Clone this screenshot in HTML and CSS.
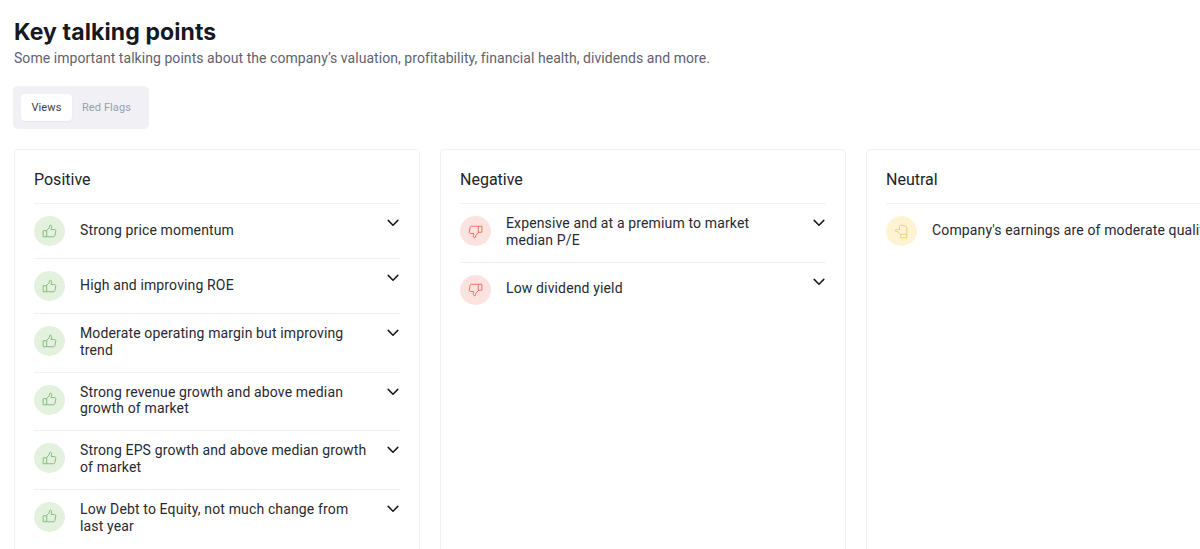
FILE: index.html
```html
<!DOCTYPE html>
<html lang="en">
<head>
<meta charset="utf-8">
<title>Key talking points</title>
<link rel="stylesheet" href="styles.css">
</head>
<body>
<svg class="defs" width="0" height="0" aria-hidden="true">
  <symbol id="thumb" viewBox="0 0 16 16">
    <path d="M4.6 7.2 7.4 4.3 8.6 1.2c1.2 0 1.9.9 1.7 2.1L9.8 5.9h3.6c.9 0 1.5.8 1.3 1.6l-1 5c-.2.7-.7 1.1-1.4 1.1H6.2c-.6 0-1.1-.2-1.6-.5M4.6 7.2H1.2v6.4h3.4z" fill="none" stroke="currentColor" stroke-width="1" stroke-linejoin="round" stroke-linecap="round"/>
  </symbol>
  <symbol id="chev" viewBox="0 0 12 8">
    <path d="M1.2 1.4 6 6.2l4.8-4.8" fill="none" stroke="currentColor" stroke-width="1.5" stroke-linecap="round" stroke-linejoin="round"/>
  </symbol>
</svg>
<main class="page">
  <h1 class="title">Key talking points</h1>
  <p class="subtitle">Some important talking points about the company’s valuation, profitability, financial health, dividends and more.</p>
  <div class="tabs">
    <span class="tab active">Views</span>
    <span class="tab">Red Flags</span>
  </div>
  <div class="columns">
    <section class="card">
      <h2 class="card-title">Positive</h2>
      <ul class="list">
        <li class="row"><span class="badge good"><svg class="ico"><use href="#thumb"/></svg></span><span class="label">Strong price momentum</span><svg class="chev"><use href="#chev"/></svg></li>
        <li class="row"><span class="badge good"><svg class="ico"><use href="#thumb"/></svg></span><span class="label">High and improving ROE</span><svg class="chev"><use href="#chev"/></svg></li>
        <li class="row"><span class="badge good"><svg class="ico"><use href="#thumb"/></svg></span><span class="label">Moderate operating margin but improving trend</span><svg class="chev"><use href="#chev"/></svg></li>
        <li class="row"><span class="badge good"><svg class="ico"><use href="#thumb"/></svg></span><span class="label">Strong revenue growth and above median growth of market</span><svg class="chev"><use href="#chev"/></svg></li>
        <li class="row"><span class="badge good"><svg class="ico"><use href="#thumb"/></svg></span><span class="label">Strong EPS growth and above median growth of market</span><svg class="chev"><use href="#chev"/></svg></li>
        <li class="row"><span class="badge good"><svg class="ico"><use href="#thumb"/></svg></span><span class="label">Low Debt to Equity, not much change from last year</span><svg class="chev"><use href="#chev"/></svg></li>
      </ul>
    </section>
    <section class="card">
      <h2 class="card-title">Negative</h2>
      <ul class="list">
        <li class="row"><span class="badge bad"><svg class="ico down"><use href="#thumb"/></svg></span><span class="label">Expensive and at a premium to market median P/E</span><svg class="chev"><use href="#chev"/></svg></li>
        <li class="row"><span class="badge bad"><svg class="ico down"><use href="#thumb"/></svg></span><span class="label">Low dividend yield</span><svg class="chev"><use href="#chev"/></svg></li>
      </ul>
    </section>
    <section class="card">
      <h2 class="card-title">Neutral</h2>
      <ul class="list">
        <li class="row plain"><span class="badge mid"><svg class="ico side"><use href="#thumb"/></svg></span><span class="label">Company's earnings are of moderate quality</span></li>
      </ul>
    </section>
  </div>
</main>
</body>
</html>
```
FILE: styles.css
```css
* { box-sizing: border-box; }
html, body { margin: 0; height: 100%; overflow: hidden; background: #fff; }
body { font-family: "Roboto", "Noto Sans", sans-serif; color: #1f2126; }
.defs { position: absolute; }
.page { padding: 18px 0 0 13px; width: 1300px; }
.title { margin: 0; padding-left: 1px; font-family: "Inter", sans-serif; font-size: 23px; line-height: 28px; font-weight: 700; color: #16191f; letter-spacing: .1px; }
.subtitle { margin: 3px 0 0; padding-left: 1px; font-size: 14px; line-height: 19px; color: #5f6270; letter-spacing: .053px; }
.tabs { display: flex; margin-top: 18px; padding: 8px; height: 43px; background: #f0f0f5; border-radius: 5px; width: 136px; }
.tab { display: flex; align-items: center; justify-content: center; padding: 0 10px; height: 27px; font-size: 11px; font-weight: 400; letter-spacing: .1px; color: #9b9dab; border-radius: 4px; white-space: nowrap; }
.tab.active { width: 51px; padding: 0; background: #fff; color: #3a3d47; box-shadow: 0 1px 2px rgba(30, 30, 60, .06); }
.columns { display: flex; gap: 20px; margin: 20px 0 0 1px; align-items: stretch; }
.card { flex: none; width: 406px; min-height: 500px; padding: 20px 19px 0; border: 1px solid #f1f1f4; border-radius: 4px; }
.card-title { margin: 0; font-size: 16px; line-height: 20px; font-weight: 400; color: #22242a; height: 33px; }
.list { margin: 0; padding: 0; list-style: none; }
.row { display: flex; align-items: flex-start; min-height: 54.6px; padding: 12px 0; border-top: 1px solid #f1f1f4; }
.badge { flex: none; display: flex; align-items: center; justify-content: center; width: 31px; height: 30px; border-radius: 50%; margin-right: 15px; }
.good { background: #e4f1df; color: #7fbb78; }
.bad { background: #fde3df; color: #e8705f; }
.mid { background: #fef4d4; color: #f0cf68; }
.ico { width: 15px; height: 15px; }
.down { transform: rotate(180deg); }
.side { transform: rotate(-90deg); }
.label { flex: 1; min-height: 30px; display: flex; align-items: center; margin: -1px 0 1px; padding-right: 20px; font-size: 14px; line-height: 16.8px; letter-spacing: .14px; color: #272a31; }
.plain .label { white-space: nowrap; }
.chev { flex: none; width: 12px; height: 8px; margin: 3px 1px 0 0; color: #15171c; }
```
